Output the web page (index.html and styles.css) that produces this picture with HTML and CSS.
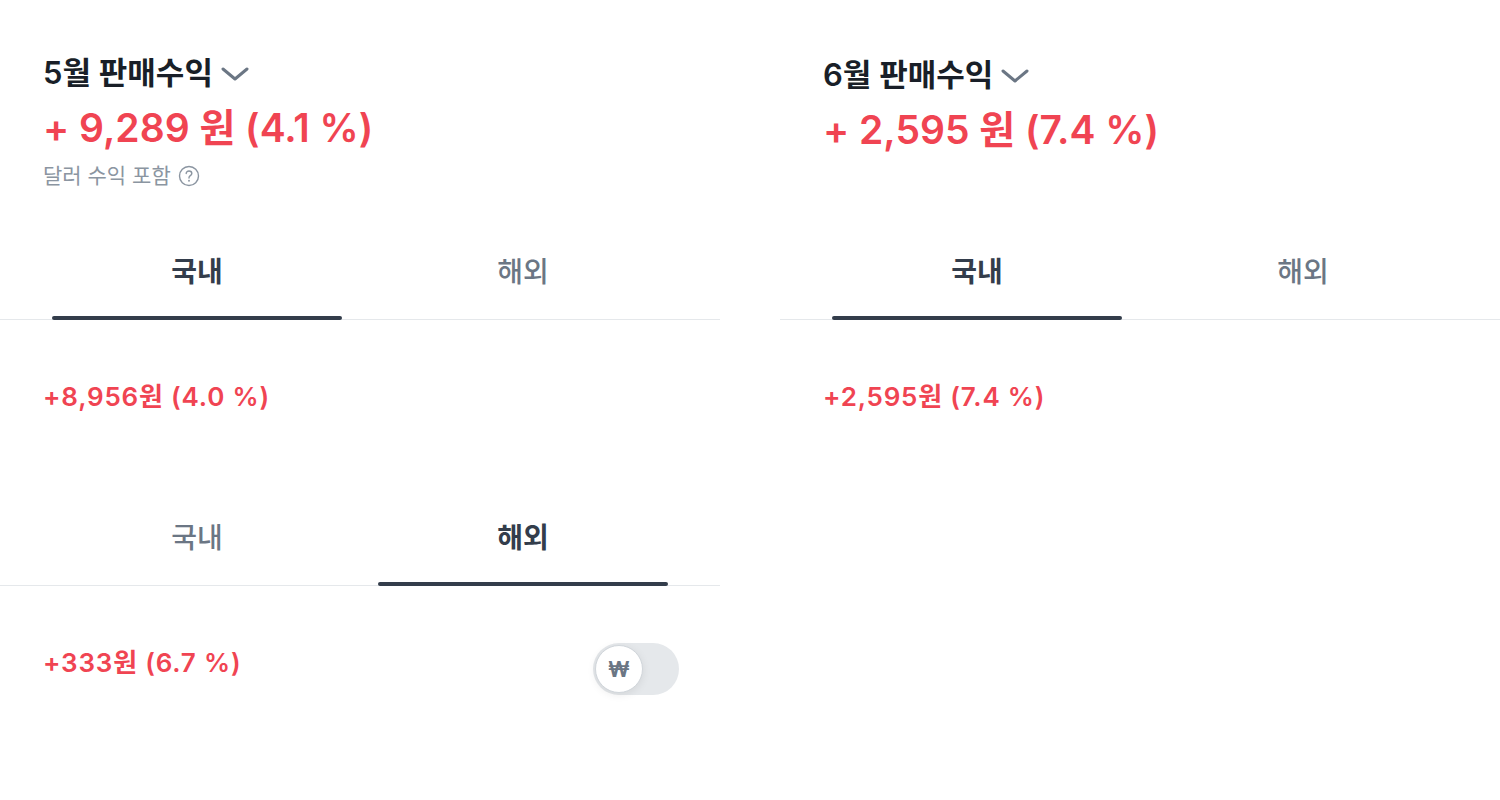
FILE: index.html
```html
<!DOCTYPE html>
<html lang="ko">
<head>
<meta charset="UTF-8">
<meta name="viewport" content="width=device-width, initial-scale=1.0">
<title>판매수익</title>
<link rel="stylesheet" href="styles.css">
</head>
<body>

<div class="board">
    <!-- May -->
    <div class="panel">
        <div class="summary">
            <h1 class="month">5월 판매수익
                <svg class="chevron" width="28" height="14" viewBox="0 0 28 14"><polyline points="2,2 14,12 26,2" fill="none" stroke="#6b7684" stroke-width="3" stroke-linecap="round" stroke-linejoin="round"/></svg>
            </h1>
            <p class="amount">+ 9,289 원 (4.1 %)</p>
            <p class="note">달러 수익 포함
                <svg class="help" width="22" height="22" viewBox="0 0 22 22"><circle cx="11" cy="11" r="9.5" fill="none" stroke="#8b95a1" stroke-width="1.4"/><path d="M8.2 8.6c0-1.6 1.2-2.6 2.8-2.6s2.8 1 2.8 2.4c0 1.1-.6 1.6-1.5 2.2-.9.6-1.3 1-1.3 2.1v.4" fill="none" stroke="#8b95a1" stroke-width="1.4" stroke-linecap="round"/><circle cx="11" cy="15.8" r="0.95" fill="#8b95a1"/></svg>
            </p>
        </div>

        <div class="tabs">
            <div class="tab active"><span>국내</span><i class="bar"></i></div>
            <div class="tab"><span>해외</span><i class="bar"></i></div>
        </div>
        <div class="value-row">
            <p class="value">+8,956원 (4.0 %)</p>
        </div>

        <div class="tabs">
            <div class="tab"><span>국내</span><i class="bar"></i></div>
            <div class="tab active"><span>해외</span><i class="bar"></i></div>
        </div>
        <div class="value-row">
            <p class="value">+333원 (6.7 %)</p>
            <div class="toggle">
                <div class="knob">₩</div>
            </div>
        </div>
    </div>

    <!-- June -->
    <div class="panel">
        <div class="summary summary-short">
            <h1 class="month">6월 판매수익
                <svg class="chevron" width="28" height="14" viewBox="0 0 28 14"><polyline points="2,2 14,12 26,2" fill="none" stroke="#6b7684" stroke-width="3" stroke-linecap="round" stroke-linejoin="round"/></svg>
            </h1>
            <p class="amount">+ 2,595 원 (7.4 %)</p>
        </div>

        <div class="tabs">
            <div class="tab active"><span>국내</span><i class="bar"></i></div>
            <div class="tab"><span>해외</span><i class="bar"></i></div>
        </div>
        <div class="value-row">
            <p class="value">+2,595원 (7.4 %)</p>
        </div>
    </div>
</div>

</body>
</html>
```

FILE: styles.css
```css
body {
    margin: 0;
    padding: 0;
    background-color: #ffffff;
    font-family: Inter, "Noto Sans CJK KR", sans-serif;
    color: #191f28;
}
.board {
    display: flex;
    gap: 60px;
}
.panel {
    width: 720px;
    flex: none;
}
.summary {
    height: 225px;
    box-sizing: border-box;
    padding: 54px 43px 0;
}
.summary-short {
    padding-top: 56px;
}
.month {
    display: flex;
    align-items: center;
    gap: 8px;
    margin: 0;
    font-size: 31px;
    line-height: 38px;
    font-weight: 600;
}
.chevron {
    margin-top: 2px;
}
.amount {
    margin: 11px 0 0;
    font-size: 39px;
    line-height: 50px;
    font-weight: 600;
    color: #f04452;
}
.note {
    display: flex;
    align-items: center;
    gap: 7px;
    margin: 9px 0 0;
    font-size: 21px;
    line-height: 28px;
    color: #8b95a1;
}
.tabs {
    display: flex;
    gap: 36px;
    padding: 0 52px;
    border-bottom: 1px solid #e5e8eb;
}
.tab {
    flex: 1;
    display: flex;
    flex-direction: column;
    align-items: center;
    padding-top: 28px;
    font-size: 28px;
    line-height: 38px;
    font-weight: 500;
    color: #6b7684;
}
.tab .bar {
    display: block;
    align-self: stretch;
    height: 4px;
    margin-top: 25px;
    margin-bottom: -1px;
    border-radius: 2px;
}
.tab.active {
    font-weight: 700;
    color: #333d4b;
}
.tab.active .bar {
    background-color: #333d4b;
}
.value-row {
    display: flex;
    justify-content: space-between;
    align-items: flex-start;
    min-height: 171px;
    box-sizing: border-box;
    padding: 57px 41px 0 43px;
}
.value {
    margin: 4px 0 0;
    font-size: 26px;
    line-height: 32px;
    font-weight: 600;
    color: #f04452;
    letter-spacing: 0.8px;
}
.toggle {
    display: flex;
    align-items: center;
    width: 86px;
    height: 52px;
    box-sizing: border-box;
    padding: 2px;
    border-radius: 26px;
    background-color: #e5e8eb;
}
.knob {
    width: 48px;
    height: 48px;
    box-sizing: border-box;
    border-radius: 50%;
    border: 1px solid #d1d6db;
    background-color: #ffffff;
    box-shadow: 0 2px 8px rgba(0, 0, 0, 0.08);
    display: flex;
    align-items: center;
    justify-content: center;
    font-size: 21px;
    font-weight: 700;
    color: #6b7684;
}
```
